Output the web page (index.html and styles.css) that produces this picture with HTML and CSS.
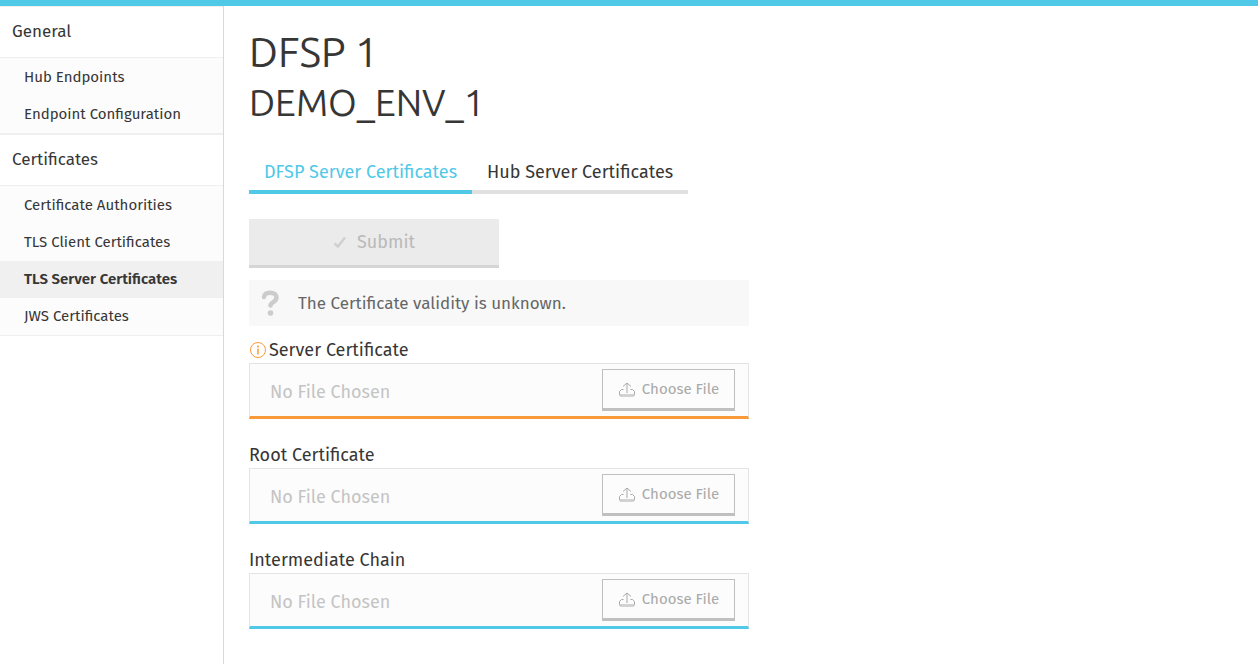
FILE: index.html
```html
<!DOCTYPE html>
<html lang="en">
<head>
<meta charset="utf-8">
<title>TLS Server Certificates</title>
<link rel="stylesheet" href="styles.css">
</head>
<body>
<svg class="sprite" aria-hidden="true">
  <symbol id="upload" viewBox="0 0 18 16">
    <path d="M5.500 8.500H3.500L1.500 10.500V13.500Q1.500 15 3 15H15Q16.500 15 16.500 13.500V10.500L14.500 8.500H12.500" fill="none" stroke="currentColor"/>
    <path d="M2 13.500H16" fill="none" stroke="currentColor" opacity=".5"/>
    <path d="M9 12V2.500M5 5.500L9 2L13 5.500" fill="none" stroke="currentColor"/>
  </symbol>
</svg>
<div class="topbar"></div>
<div class="layout">
  <nav class="sidebar">
    <h3 class="group-title">General</h3>
    <ul class="menu">
      <li><a class="menu-link" href="#">Hub Endpoints</a></li>
      <li><a class="menu-link" href="#">Endpoint Configuration</a></li>
    </ul>
    <h3 class="group-title">Certificates</h3>
    <ul class="menu">
      <li><a class="menu-link" href="#">Certificate Authorities</a></li>
      <li><a class="menu-link" href="#">TLS Client Certificates</a></li>
      <li><a class="menu-link selected" href="#" aria-current="page">TLS Server Certificates</a></li>
      <li><a class="menu-link" href="#">JWS Certificates</a></li>
    </ul>
  </nav>
  <main class="content">
    <h1 class="title">DFSP 1</h1>
    <h2 class="subtitle">DEMO_ENV_1</h2>
    <div class="tabs" role="tablist">
      <button class="tab active" type="button" role="tab" aria-selected="true">DFSP Server Certificates</button>
      <button class="tab" type="button" role="tab" aria-selected="false">Hub Server Certificates</button>
    </div>
    <form class="form">
      <button class="submit" type="submit" disabled>
        <svg class="check" viewBox="0 0 14 14" aria-hidden="true"><path d="M1.500 8.500L5 11.500L12 2.500" fill="none" stroke="currentColor" stroke-width="2.500"/></svg>
        Submit
      </button>
      <div class="notice">
        <svg class="question" viewBox="0 0 18 26" aria-hidden="true"><path d="M3 7C3.500 4 5.800 2.800 9 2.800C12.600 2.800 15.500 4.400 15.500 7.400C15.500 9.600 14 10.900 12.300 12.200C10.500 13.400 9.500 14.200 9.500 15.500" fill="none" stroke="currentColor" stroke-width="4.500" stroke-linecap="round"/><circle cx="9.500" cy="23" r="2.800" fill="currentColor"/></svg>
        <span>The Certificate validity is unknown.</span>
      </div>
      <div class="field required">
        <div class="field-head">
          <svg class="info" viewBox="0 0 18 18" aria-hidden="true"><circle cx="9" cy="9" r="7.500" fill="none" stroke="currentColor"/><circle cx="9" cy="5.500" r="1" fill="currentColor"/><path d="M9 7.500V13.500" stroke="currentColor" stroke-width="1.500"/></svg>
          <label for="server">Server Certificate</label>
        </div>
        <div class="file-box">
          <input class="file-name" id="server" type="text" placeholder="No File Chosen" readonly>
          <button class="choose" type="button"><svg class="upload" aria-hidden="true"><use href="#upload"/></svg>Choose File</button>
        </div>
      </div>
      <div class="field">
        <div class="field-head"><label for="root">Root Certificate</label></div>
        <div class="file-box">
          <input class="file-name" id="root" type="text" placeholder="No File Chosen" readonly>
          <button class="choose" type="button"><svg class="upload" aria-hidden="true"><use href="#upload"/></svg>Choose File</button>
        </div>
      </div>
      <div class="field">
        <div class="field-head"><label for="chain">Intermediate Chain</label></div>
        <div class="file-box">
          <input class="file-name" id="chain" type="text" placeholder="No File Chosen" readonly>
          <button class="choose" type="button"><svg class="upload" aria-hidden="true"><use href="#upload"/></svg>Choose File</button>
        </div>
      </div>
    </form>
  </main>
</div>
</body>
</html>
```
FILE: styles.css
```css
* { box-sizing: border-box; }

body {
  display: flex;
  flex-direction: column;
  min-height: 100vh;
  margin: 0;
  background: #fff;
  color: #363636;
  font-family: "Fira Sans", "Noto Sans", sans-serif;
  font-size: 18px;
}

button, input { font: inherit; }

.sprite { position: absolute; width: 0; height: 0; }

.topbar { height: 6px; background: #50c8e8; }

.layout { display: flex; flex: 1; }

.sidebar {
  flex: 0 0 224px;
  border-right: 1px solid #d9d9d9;
}

.group-title {
  margin: 0;
  padding: 0 12px;
  border-top: 1px solid #efefef;
  border-bottom: 1px solid #efefef;
  font-size: 17px;
  font-weight: 400;
  line-height: 50px;
}

.menu {
  margin: 0;
  padding: 1px 0 0;
  list-style: none;
  background: #fcfcfc;
  border-bottom: 1px solid #efefef;
}

.menu-link {
  display: block;
  padding: 0 24px;
  color: inherit;
  font-size: 15px;
  line-height: 37px;
  text-decoration: none;
  white-space: nowrap;
}

.selected { background: #f0f0f0; font-weight: 600; }

.content { flex: 1; min-width: 0; padding: 20px 25px; }

.title, .subtitle {
  margin: 0;
  font-family: Ubuntu, "Noto Sans", sans-serif;
  font-weight: 400;
}

.title { font-size: 41px; line-height: 52px; }
.subtitle { font-size: 37px; line-height: 50px; }

.tabs { display: flex; margin-top: 26px; }

.tab {
  padding: 2px 15px;
  border: 0;
  border-bottom: 4px solid #e0e0e0;
  background: none;
  color: inherit;
  line-height: 32px;
}

.tab.active { border-color: #50c8e8; color: #50c8e8; }

.form { max-width: 500px; margin-top: 25px; }

.submit {
  display: flex;
  align-items: center;
  justify-content: center;
  gap: 10px;
  width: 50%;
  height: 49px;
  padding: 0;
  border: 0;
  border-bottom: 3px solid #d5d5d5;
  background: #ebebeb;
  color: #b9b9b9;
  font-size: 18px;
}

.check { width: 14px; height: 14px; color: #d0d0d0; }

.notice {
  display: flex;
  align-items: center;
  gap: 19px;
  height: 46px;
  margin-top: 12px;
  padding: 0 12px;
  background: #f8f8f8;
  color: #666;
  font-size: 17px;
}

.question { width: 18px; height: 26px; color: #ccc; }

.field { margin-bottom: 24px; }
.notice + .field { margin-top: 12px; }

.field-head {
  display: flex;
  align-items: center;
  gap: 2px;
  height: 25px;
  padding-bottom: 2px;
}

.info { width: 18px; height: 18px; color: #f89a38; }

.file-box {
  display: flex;
  align-items: flex-start;
  height: 56px;
  padding: 5px 13px 0 20px;
  border: 1px solid #e4e4e4;
  border-bottom: 3px solid #50c8e8;
  background: #fcfcfc;
}

.required .file-box { border-bottom-color: #f89a38; }

.file-name {
  flex: 1;
  min-width: 0;
  height: 46px;
  padding: 0;
  border: 0;
  outline: 0;
  background: none;
  color: inherit;
}

.file-name::placeholder { color: #c4c4c4; opacity: 1; }

.choose {
  display: flex;
  align-items: center;
  justify-content: center;
  gap: 6px;
  width: 133px;
  height: 42px;
  padding: 0;
  border: 1px solid #c0c0c0;
  border-bottom-width: 3px;
  background: #fcfcfc;
  color: #a9a9a9;
  font-size: 15px;
}

.upload { width: 18px; height: 16px; }
```
